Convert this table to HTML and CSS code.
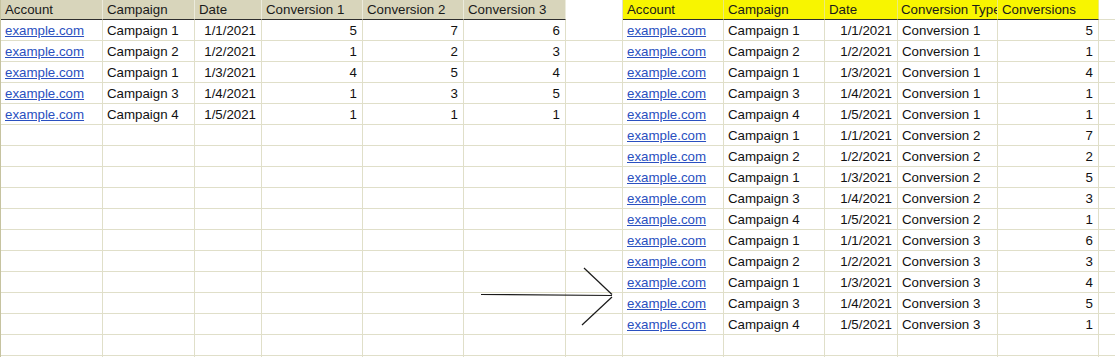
FILE: index.html
```html
<!DOCTYPE html>
<html>
<head>
<meta charset="utf-8">
<link rel="stylesheet" href="styles.css">
</head>
<body>
<div class="sheet">
  <div class="c h">Account</div><div class="c h">Campaign</div><div class="c h">Date</div><div class="c h">Conversion 1</div><div class="c h">Conversion 2</div><div class="c h">Conversion 3</div><div class="c hg"></div><div class="c y">Account</div><div class="c y">Campaign</div><div class="c y">Date</div><div class="c y tight">Conversion Type</div><div class="c y">Conversions</div><div class="c hl"></div>

  <div class="c t"><a href="#">example.com</a></div><div class="c t">Campaign 1</div><div class="c n">1/1/2021</div><div class="c n">5</div><div class="c n">7</div><div class="c n">6</div><div class="c"></div><div class="c t"><a href="#">example.com</a></div><div class="c t">Campaign 1</div><div class="c n">1/1/2021</div><div class="c t">Conversion 1</div><div class="c n">5</div><div class="c l"></div>
  <div class="c t"><a href="#">example.com</a></div><div class="c t">Campaign 2</div><div class="c n">1/2/2021</div><div class="c n">1</div><div class="c n">2</div><div class="c n">3</div><div class="c"></div><div class="c t"><a href="#">example.com</a></div><div class="c t">Campaign 2</div><div class="c n">1/2/2021</div><div class="c t">Conversion 1</div><div class="c n">1</div><div class="c l"></div>
  <div class="c t"><a href="#">example.com</a></div><div class="c t">Campaign 1</div><div class="c n">1/3/2021</div><div class="c n">4</div><div class="c n">5</div><div class="c n">4</div><div class="c"></div><div class="c t"><a href="#">example.com</a></div><div class="c t">Campaign 1</div><div class="c n">1/3/2021</div><div class="c t">Conversion 1</div><div class="c n">4</div><div class="c l"></div>
  <div class="c t"><a href="#">example.com</a></div><div class="c t">Campaign 3</div><div class="c n">1/4/2021</div><div class="c n">1</div><div class="c n">3</div><div class="c n">5</div><div class="c"></div><div class="c t"><a href="#">example.com</a></div><div class="c t">Campaign 3</div><div class="c n">1/4/2021</div><div class="c t">Conversion 1</div><div class="c n">1</div><div class="c l"></div>
  <div class="c t"><a href="#">example.com</a></div><div class="c t">Campaign 4</div><div class="c n">1/5/2021</div><div class="c n">1</div><div class="c n">1</div><div class="c n">1</div><div class="c"></div><div class="c t"><a href="#">example.com</a></div><div class="c t">Campaign 4</div><div class="c n">1/5/2021</div><div class="c t">Conversion 1</div><div class="c n">1</div><div class="c l"></div>

  <div class="c"></div><div class="c"></div><div class="c"></div><div class="c"></div><div class="c"></div><div class="c"></div><div class="c"></div><div class="c t"><a href="#">example.com</a></div><div class="c t">Campaign 1</div><div class="c n">1/1/2021</div><div class="c t">Conversion 2</div><div class="c n">7</div><div class="c l"></div>
  <div class="c"></div><div class="c"></div><div class="c"></div><div class="c"></div><div class="c"></div><div class="c"></div><div class="c"></div><div class="c t"><a href="#">example.com</a></div><div class="c t">Campaign 2</div><div class="c n">1/2/2021</div><div class="c t">Conversion 2</div><div class="c n">2</div><div class="c l"></div>
  <div class="c"></div><div class="c"></div><div class="c"></div><div class="c"></div><div class="c"></div><div class="c"></div><div class="c"></div><div class="c t"><a href="#">example.com</a></div><div class="c t">Campaign 1</div><div class="c n">1/3/2021</div><div class="c t">Conversion 2</div><div class="c n">5</div><div class="c l"></div>
  <div class="c"></div><div class="c"></div><div class="c"></div><div class="c"></div><div class="c"></div><div class="c"></div><div class="c"></div><div class="c t"><a href="#">example.com</a></div><div class="c t">Campaign 3</div><div class="c n">1/4/2021</div><div class="c t">Conversion 2</div><div class="c n">3</div><div class="c l"></div>
  <div class="c"></div><div class="c"></div><div class="c"></div><div class="c"></div><div class="c"></div><div class="c"></div><div class="c"></div><div class="c t"><a href="#">example.com</a></div><div class="c t">Campaign 4</div><div class="c n">1/5/2021</div><div class="c t">Conversion 2</div><div class="c n">1</div><div class="c l"></div>
  <div class="c"></div><div class="c"></div><div class="c"></div><div class="c"></div><div class="c"></div><div class="c"></div><div class="c"></div><div class="c t"><a href="#">example.com</a></div><div class="c t">Campaign 1</div><div class="c n">1/1/2021</div><div class="c t">Conversion 3</div><div class="c n">6</div><div class="c l"></div>
  <div class="c"></div><div class="c"></div><div class="c"></div><div class="c"></div><div class="c"></div><div class="c"></div><div class="c"></div><div class="c t"><a href="#">example.com</a></div><div class="c t">Campaign 2</div><div class="c n">1/2/2021</div><div class="c t">Conversion 3</div><div class="c n">3</div><div class="c l"></div>
  <div class="c"></div><div class="c"></div><div class="c"></div><div class="c"></div><div class="c"></div><div class="c"></div><div class="c"></div><div class="c t"><a href="#">example.com</a></div><div class="c t">Campaign 1</div><div class="c n">1/3/2021</div><div class="c t">Conversion 3</div><div class="c n">4</div><div class="c l"></div>
  <div class="c"></div><div class="c"></div><div class="c"></div><div class="c"></div><div class="c"></div><div class="c"></div><div class="c"></div><div class="c t"><a href="#">example.com</a></div><div class="c t">Campaign 3</div><div class="c n">1/4/2021</div><div class="c t">Conversion 3</div><div class="c n">5</div><div class="c l"></div>
  <div class="c"></div><div class="c"></div><div class="c"></div><div class="c"></div><div class="c"></div><div class="c"></div><div class="c"></div><div class="c t"><a href="#">example.com</a></div><div class="c t">Campaign 4</div><div class="c n">1/5/2021</div><div class="c t">Conversion 3</div><div class="c n">1</div><div class="c l"></div>

  <div class="c"></div><div class="c"></div><div class="c"></div><div class="c"></div><div class="c"></div><div class="c"></div><div class="c"></div><div class="c"></div><div class="c"></div><div class="c"></div><div class="c"></div><div class="c"></div><div class="c l"></div>
  <div class="c"></div><div class="c"></div><div class="c"></div><div class="c"></div><div class="c"></div><div class="c"></div><div class="c"></div><div class="c"></div><div class="c"></div><div class="c"></div><div class="c"></div><div class="c"></div><div class="c l"></div>

  <svg class="arrow" width="1115" height="357" viewBox="0 0 1115 357">
    <line x1="481" y1="294.5" x2="612" y2="295.5" stroke="#1a1a1a" stroke-width="1.2"/>
    <line x1="584" y1="268" x2="612" y2="294.5" stroke="#1a1a1a" stroke-width="1.2"/>
    <line x1="612" y1="297" x2="582" y2="325" stroke="#1a1a1a" stroke-width="1.2"/>
  </svg>
</div>
</body>
</html>
```

FILE: styles.css
```css
html, body {
  margin: 0;
  padding: 0;
  background: #ffffff;
}

body {
  width: 1115px;
  height: 357px;
  overflow: hidden;
  font-family: "Liberation Sans", Arial, sans-serif;
  font-size: 13.3px;
  color: #111111;
}

.sheet {
  position: relative;
  display: grid;
  grid-template-columns: 102px 92px 67px 101px 101px 102px 57px 101px 101px 73px 100px 101px 1fr;
  grid-template-rows: 20px repeat(17, 21px);
  border-left: 1px solid #c6c3a0;
  height: 357px;
  overflow: hidden;
}

.c {
  box-sizing: border-box;
  border-right: 1px solid #e0dfc9;
  border-bottom: 1px solid #e0dfc9;
  padding-top: 1px;
  line-height: 20px;
  white-space: nowrap;
  overflow: hidden;
}

.t {
  padding-left: 4px;
}

.n {
  text-align: right;
  padding-right: 5px;
}

.l {
  border-right: none;
}

.h, .y {
  padding-top: 0;
  line-height: 19px;
  padding-left: 4px;
  border-bottom: 1px solid #2e2e2e;
  color: #1a1a1a;
}

.y.tight {
  padding-left: 3px;
}

.h {
  background: #d8d5bb;
  border-right-color: #ecebdc;
}

.y {
  background: #f8f500;
  border-right-color: #eceb7a;
}

.hg {
  border-bottom: none;
  border-right-color: #e0dfc9;
}

.hl {
  border-right: none;
}

.t a {
  color: #2a50c0;
  text-decoration: underline;
}

.arrow {
  position: absolute;
  left: -1px;
  top: 0;
  pointer-events: none;
}
```
